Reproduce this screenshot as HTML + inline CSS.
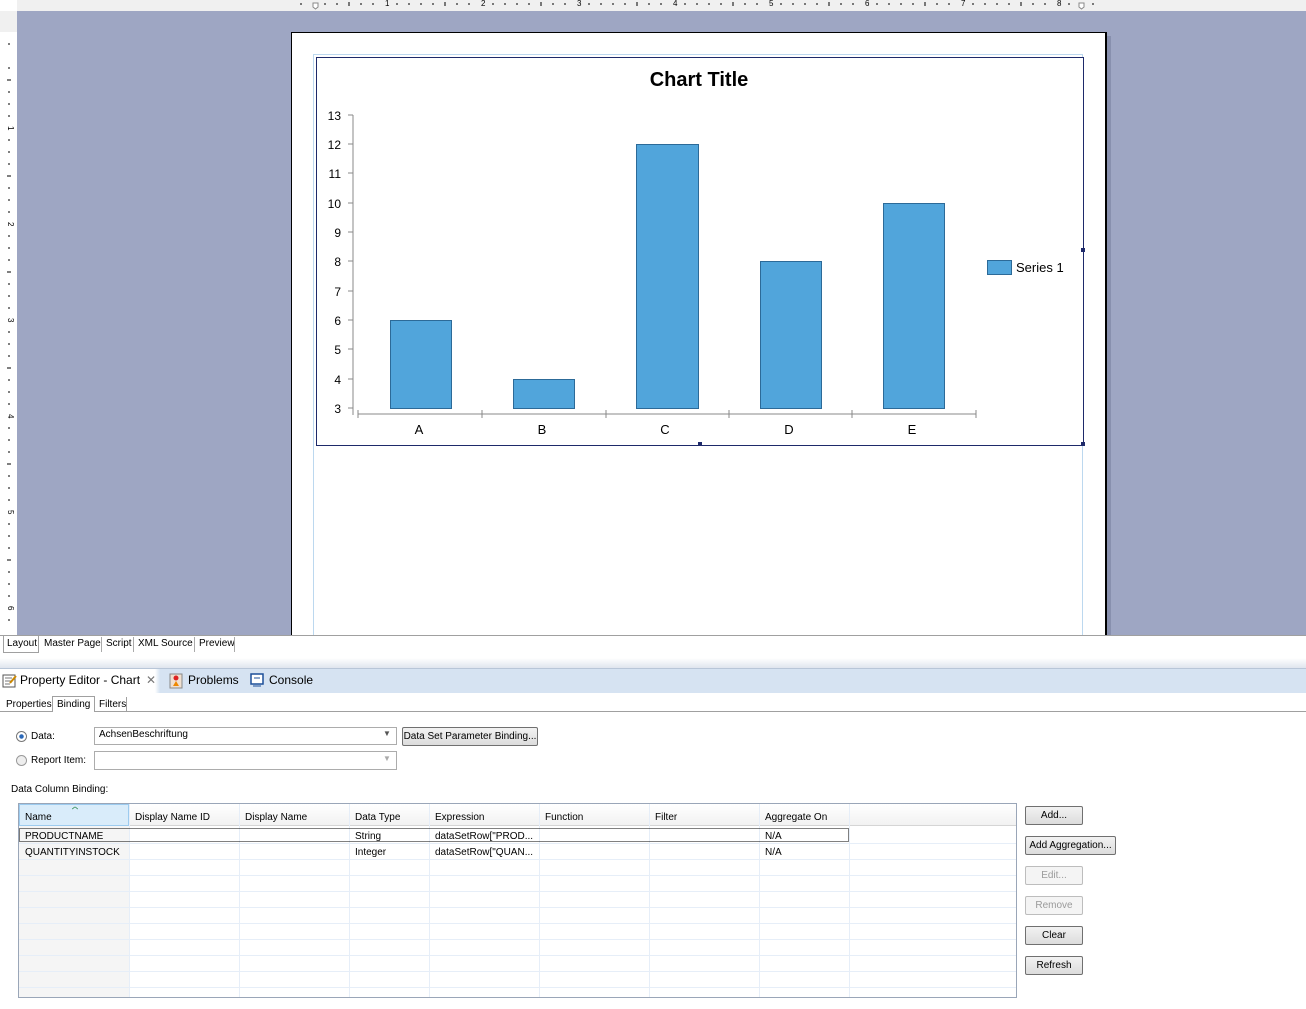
<!DOCTYPE html><html><head><style>
*{margin:0;padding:0;box-sizing:border-box}
body{width:1306px;height:1009px;overflow:hidden;background:#fff;font-family:"Liberation Sans",sans-serif;font-size:10px;color:#000;position:relative}
.a{position:absolute}
.t{position:absolute;font-size:10px;white-space:nowrap}
.btn{position:absolute;height:19px;border:1px solid #707070;border-radius:2px;background:linear-gradient(#f2f2f2,#dcdcdc);font-size:10px;text-align:center;line-height:17px}
.dis{border-color:#bdbdbd;color:#9a9a9a;background:#f4f4f4}
</style></head><body>
<!-- rulers -->
<div class="a" style="left:17px;top:0;width:1289px;height:11px;background:#f0f0f0"></div>
<div class="a" style="left:0;top:0;width:17px;height:635px;background:#fff"></div>
<div class="a" style="left:0;top:11px;width:17px;height:21px;background:#f0f0f0"></div>
<div class="a" style="left:17px;top:11px;width:1289px;height:624px;background:#9ea6c3"></div>
<svg class="a" style="left:0;top:0" width="1306" height="635">
<g fill="#000" font-size="8" font-family="Liberation Sans">
<text x="385" y="6">1</text><text x="481" y="6">2</text><text x="577" y="6">3</text><text x="673" y="6">4</text><text x="769" y="6">5</text><text x="865" y="6">6</text><text x="961" y="6">7</text><text x="1057" y="6">8</text>
</g>
<g stroke="#000">
<path d="M301 3v2M313 3v2M325 3v2M337 3v2M349 2v4M361 3v2M373 3v2M397 3v2M409 3v2M421 3v2M433 3v2M445 2v4M457 3v2M469 3v2M493 3v2M505 3v2M517 3v2M529 3v2M541 2v4M553 3v2M565 3v2M589 3v2M601 3v2M613 3v2M625 3v2M637 2v4M649 3v2M661 3v2M685 3v2M697 3v2M709 3v2M721 3v2M733 2v4M745 3v2M757 3v2M781 3v2M793 3v2M805 3v2M817 3v2M829 2v4M841 3v2M853 3v2M877 3v2M889 3v2M901 3v2M913 3v2M925 2v4M937 3v2M949 3v2M973 3v2M985 3v2M997 3v2M1009 3v2M1021 2v4M1033 3v2M1045 3v2M1069 3v2M1081 3v2M1093 3v2"/>
<path d="M8 44h2M8 68h2M7 80h4M8 92h2M8 104h2M8 116h2M8 140h2M8 152h2M8 164h2M7 176h4M8 188h2M8 200h2M8 212h2M8 236h2M8 248h2M8 260h2M7 272h4M8 284h2M8 296h2M8 308h2M8 332h2M8 344h2M8 356h2M7 368h4M8 380h2M8 392h2M8 404h2M8 428h2M8 440h2M8 452h2M7 464h4M8 476h2M8 488h2M8 500h2M8 524h2M8 536h2M8 548h2M7 560h4M8 572h2M8 584h2M8 596h2M8 620h2"/>
</g>
<g font-size="8" font-family="Liberation Sans"><text x="8" y="130" transform="rotate(90 10 128)">1</text><text x="8" y="226" transform="rotate(90 10 224)">2</text><text x="8" y="322" transform="rotate(90 10 320)">3</text><text x="8" y="418" transform="rotate(90 10 416)">4</text><text x="8" y="514" transform="rotate(90 10 512)">5</text><text x="8" y="610" transform="rotate(90 10 608)">6</text></g>
<path d="M313 3h5v4l-2.5 2l-2.5-2z M1079 3h5v4l-2.5 2l-2.5-2z" fill="#fff" stroke="#888"/>
</svg>
<!-- page -->
<div class="a" style="left:295px;top:36px;width:816px;height:599px;background:#8890ae"></div>
<div class="a" style="left:291px;top:32px;width:816px;height:603px;background:#fff;border:1px solid #000;border-bottom:none;border-right-width:2px"></div>
<div class="a" style="left:313px;top:54px;width:770px;height:581px;border:1px solid #bcd8ef;border-bottom:none"></div>
<div class="a" style="left:316px;top:57px;width:768px;height:389px;border:1px solid #1e2a6a;background:#fff"></div>
<svg class="a" style="left:316px;top:57px" width="768" height="389">
<text x="383" y="29" font-size="20" font-weight="bold" text-anchor="middle" font-family="Liberation Sans">Chart Title</text>
<g font-size="12" font-family="Liberation Sans" text-anchor="end">
<text x="25" y="63">13</text><text x="25" y="92">12</text><text x="25" y="121">11</text><text x="25" y="151">10</text><text x="25" y="180">9</text><text x="25" y="209">8</text><text x="25" y="239">7</text><text x="25" y="268">6</text><text x="25" y="297">5</text><text x="25" y="327">4</text><text x="25" y="356">3</text>
</g>
<g stroke="#888"><path d="M37 58v300M32 58h5M32 87h5M32 116h5M32 146h5M32 175h5M32 204h5M32 234h5M32 263h5M32 292h5M32 322h5M32 351h5M42 357h618M166 353v8M290 353v8M413 353v8M536 353v8M660 353v8M42 353v8"/></g>
<g fill="#51a5db" stroke="#2c6a98"><rect x="74.5" y="263.5" width="61" height="88"/><rect x="197.5" y="322.5" width="61" height="29"/><rect x="320.5" y="87.5" width="62" height="264"/><rect x="444.5" y="204.5" width="61" height="147"/><rect x="567.5" y="146.5" width="61" height="205"/><rect x="671.5" y="203.5" width="24" height="14"/></g>
<g font-size="13" font-family="Liberation Sans" text-anchor="middle"><text x="103" y="377">A</text><text x="226" y="377">B</text><text x="349" y="377">C</text><text x="473" y="377">D</text><text x="596" y="377">E</text></g>
<text x="700" y="215" font-size="13" font-family="Liberation Sans">Series 1</text>
</svg>
<div class="a" style="left:1081px;top:248px;width:4px;height:4px;background:#1e2a6a"></div>
<div class="a" style="left:1081px;top:442px;width:4px;height:4px;background:#1e2a6a"></div>
<div class="a" style="left:698px;top:442px;width:4px;height:4px;background:#1e2a6a"></div>
<!-- editor tabs -->
<div class="a" style="left:0;top:635px;width:1306px;height:1px;background:#a0a0a0"></div>
<div class="t" style="left:3px;top:636px;height:17px;width:36px;border:1px solid #a0a0a0;border-top:none;background:#fff;padding:2px 0 0 3px">Layout</div>
<div class="t" style="left:44px;top:638px">Master Page</div>
<div class="t" style="left:106px;top:638px">Script</div>
<div class="t" style="left:138px;top:638px">XML Source</div>
<div class="t" style="left:199px;top:638px">Preview</div>
<div class="a" style="left:101px;top:637px;width:1px;height:15px;background:#aaa"></div>
<div class="a" style="left:133px;top:637px;width:1px;height:15px;background:#aaa"></div>
<div class="a" style="left:194px;top:637px;width:1px;height:15px;background:#aaa"></div>
<div class="a" style="left:234px;top:637px;width:1px;height:15px;background:#aaa"></div>
<div class="a" style="left:0;top:658px;width:1306px;height:10px;background:linear-gradient(#fff,#dfe5ee)"></div>
<!-- view tabs -->
<div class="a" style="left:0;top:668px;width:1306px;height:25px;background:#d6e3f2;border-top:1px solid #b8c6d8"></div>
<div class="a" style="left:0;top:669px;width:155px;height:24px;background:#fff"></div>
<div class="a" style="left:155px;top:669px;width:5px;height:24px;background:linear-gradient(90deg,#fff,#d6e3f2)"></div>
<svg class="a" style="left:2px;top:673px" width="16" height="16"><rect x="1" y="2" width="12" height="12" fill="#fff" stroke="#555"/><path d="M3 5h7M3 8h7M3 11h5" stroke="#777"/><path d="M8 10l6-7" stroke="#c80" stroke-width="2"/></svg>
<div class="t" style="left:20px;top:673px;font-size:12px">Property Editor - Chart</div>
<div class="t" style="left:146px;top:673px;font-size:12px;color:#777">✕</div>
<svg class="a" style="left:169px;top:673px" width="14" height="16"><rect x="1" y="1" width="12" height="14" fill="#f0e0d0" stroke="#888"/><circle cx="7" cy="5" r="2.5" fill="#d22"/><path d="M4 13l3-5 3 5z" fill="#e80"/></svg>
<div class="t" style="left:188px;top:673px;font-size:12px">Problems</div>
<svg class="a" style="left:250px;top:673px" width="14" height="14"><rect x="1" y="1" width="12" height="10" fill="#fff" stroke="#1d4f99" stroke-width="1.5"/><path d="M3 13h8M4 5h6" stroke="#1d4f99"/></svg>
<div class="t" style="left:269px;top:673px;font-size:12px">Console</div>
<!-- sub tabs -->
<div class="a" style="left:0;top:711px;width:1306px;height:1px;background:#a0a0a0"></div>
<div class="t" style="left:6px;top:699px">Properties</div>
<div class="a" style="left:52px;top:696px;width:43px;height:16px;border:1px solid #a0a0a0;border-bottom:none;background:#fff"></div>
<div class="t" style="left:57px;top:699px">Binding</div>
<div class="t" style="left:99px;top:699px">Filters</div>
<div class="a" style="left:126px;top:697px;width:1px;height:14px;background:#a0a0a0"></div>
<!-- data row -->
<div class="a" style="left:16px;top:731px;width:11px;height:11px;border-radius:50%;border:1px solid #777;background:radial-gradient(#2a68b8 30%,#fff 40%)"></div>
<div class="t" style="left:31px;top:731px">Data:</div>
<div class="a" style="left:94px;top:727px;width:303px;height:18px;border:1px solid #acacac;background:#fff"></div>
<div class="t" style="left:99px;top:729px">AchsenBeschriftung</div>
<div class="t" style="left:383px;top:729px;font-size:8px;color:#555">▼</div>
<div class="btn" style="left:402px;top:727px;width:136px">Data Set Parameter Binding...</div>
<div class="a" style="left:16px;top:755px;width:11px;height:11px;border-radius:50%;border:1px solid #999;background:#eee"></div>
<div class="t" style="left:31px;top:755px">Report Item:</div>
<div class="a" style="left:94px;top:751px;width:303px;height:19px;border:1px solid #acacac;background:#fff"></div>
<div class="t" style="left:383px;top:754px;font-size:8px;color:#aaa">▼</div>
<div class="t" style="left:11px;top:784px">Data Column Binding:</div>
<!-- table -->
<div class="a" style="left:18px;top:803px;width:999px;height:195px;border:1px solid #9aa6b8;background:#fff;overflow:hidden">
<div class="a" style="left:0;top:0;width:110px;height:195px;background:#f5f5f5"></div>
<div class="a" style="left:0;top:0;width:110px;height:22px;background:#d9ecfa;border:1px solid #9ccbef"></div>
<div class="a" style="left:110px;top:0;width:890px;height:22px;background:linear-gradient(#fff,#f2f2f2);border-bottom:1px solid #d5d5d5"></div>
<svg class="a" style="left:0;top:0" width="1000" height="195" shape-rendering="crispEdges"><g stroke="#e6eef8"><path d="M110.5 0v195M220.5 0v195M330.5 0v195M410.5 0v195M520.5 0v195M630.5 0v195M740.5 0v195M830.5 0v195"/><path d="M0 39.5h1000M0 55.5h1000M0 71.5h1000M0 87.5h1000M0 103.5h1000M0 119.5h1000M0 135.5h1000M0 151.5h1000M0 167.5h1000M0 183.5h1000"/></g><path d="M53 5l3-2 3 2" stroke="#6a8" fill="none"/><rect x="0.5" y="24.5" width="829" height="13" fill="none" stroke="#000" stroke-dasharray="1 1"/></svg>
<div class="t" style="left:6px;top:8px">Name</div>
<div class="t" style="left:116px;top:8px">Display Name ID</div>
<div class="t" style="left:226px;top:8px">Display Name</div>
<div class="t" style="left:336px;top:8px">Data Type</div>
<div class="t" style="left:416px;top:8px">Expression</div>
<div class="t" style="left:526px;top:8px">Function</div>
<div class="t" style="left:636px;top:8px">Filter</div>
<div class="t" style="left:746px;top:8px">Aggregate On</div>
<div class="t" style="left:6px;top:27px">PRODUCTNAME</div>
<div class="t" style="left:336px;top:27px">String</div>
<div class="t" style="left:416px;top:27px">dataSetRow["PROD...</div>
<div class="t" style="left:746px;top:27px">N/A</div>
<div class="t" style="left:6px;top:43px">QUANTITYINSTOCK</div>
<div class="t" style="left:336px;top:43px">Integer</div>
<div class="t" style="left:416px;top:43px">dataSetRow["QUAN...</div>
<div class="t" style="left:746px;top:43px">N/A</div>
</div>
<div class="btn" style="left:1025px;top:806px;width:58px">Add...</div>
<div class="btn" style="left:1025px;top:836px;width:91px">Add Aggregation...</div>
<div class="btn dis" style="left:1025px;top:866px;width:58px">Edit...</div>
<div class="btn dis" style="left:1025px;top:896px;width:58px">Remove</div>
<div class="btn" style="left:1025px;top:926px;width:58px">Clear</div>
<div class="btn" style="left:1025px;top:956px;width:58px">Refresh</div>
</body></html>
